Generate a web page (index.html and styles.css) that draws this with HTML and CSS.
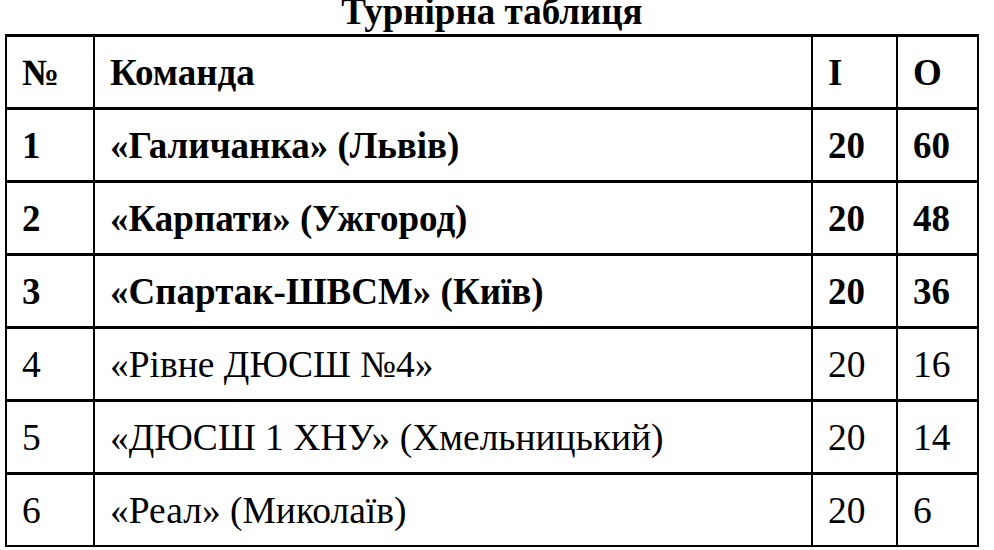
FILE: index.html
```html
<!DOCTYPE html>
<html lang="uk">
<head>
<meta charset="utf-8">
<link rel="stylesheet" href="styles.css">
<title>Турнірна таблиця</title>
</head>
<body>
<div class="page">
  <h1 class="title">Турнірна таблиця</h1>
  <div class="standings">
    <div class="cell b">№</div><div class="cell b">Команда</div><div class="cell b">І</div><div class="cell b">О</div>
    <div class="cell b">1</div><div class="cell b">«Галичанка» (Львів)</div><div class="cell b">20</div><div class="cell b">60</div>
    <div class="cell b">2</div><div class="cell b">«Карпати» (Ужгород)</div><div class="cell b">20</div><div class="cell b">48</div>
    <div class="cell b">3</div><div class="cell b">«Спартак-ШВСМ» (Київ)</div><div class="cell b">20</div><div class="cell b">36</div>
    <div class="cell">4</div><div class="cell">«Рівне ДЮСШ №4»</div><div class="cell">20</div><div class="cell">16</div>
    <div class="cell">5</div><div class="cell">«ДЮСШ 1 ХНУ» (Хмельницький)</div><div class="cell">20</div><div class="cell">14</div>
    <div class="cell last">6</div><div class="cell last">«Реал» (Миколаїв)</div><div class="cell last">20</div><div class="cell last">6</div>
  </div>
</div>
</body>
</html>
```

FILE: styles.css
```css
html, body {
  margin: 0;
  padding: 0;
  background: #ffffff;
}
.page {
  padding: 0 0 0 5px;
  font-family: "Liberation Serif", "Times New Roman", serif;
  color: #000;
}
.title {
  margin: 0;
  width: 974px;
  height: 34px;
  box-sizing: border-box;
  line-height: 24px;
  font-family: "Liberation Serif", "Times New Roman", serif;
  font-size: 37px;
  font-weight: bold;
  text-align: center;
}
.standings {
  display: grid;
  grid-template-columns: 88px 718px 85px 81px;
  grid-template-rows: repeat(6, 73px) 72px;
  width: 974px;
  box-sizing: border-box;
  border-top: 3px solid #000;
  border-left: 2px solid #000;
  font-family: "Liberation Serif", "Times New Roman", serif;
  font-size: 37.5px;
}
.cell {
  display: flex;
  align-items: center;
  padding: 0 0 0 15px;
  border-right: 2px solid #000;
  border-bottom: 3px solid #000;
  white-space: nowrap;
  font-family: "Liberation Serif", "Times New Roman", serif;
}
.cell.last {
  border-bottom-width: 2px;
}
.b {
  font-weight: bold;
  font-size: 37px;
}
```
